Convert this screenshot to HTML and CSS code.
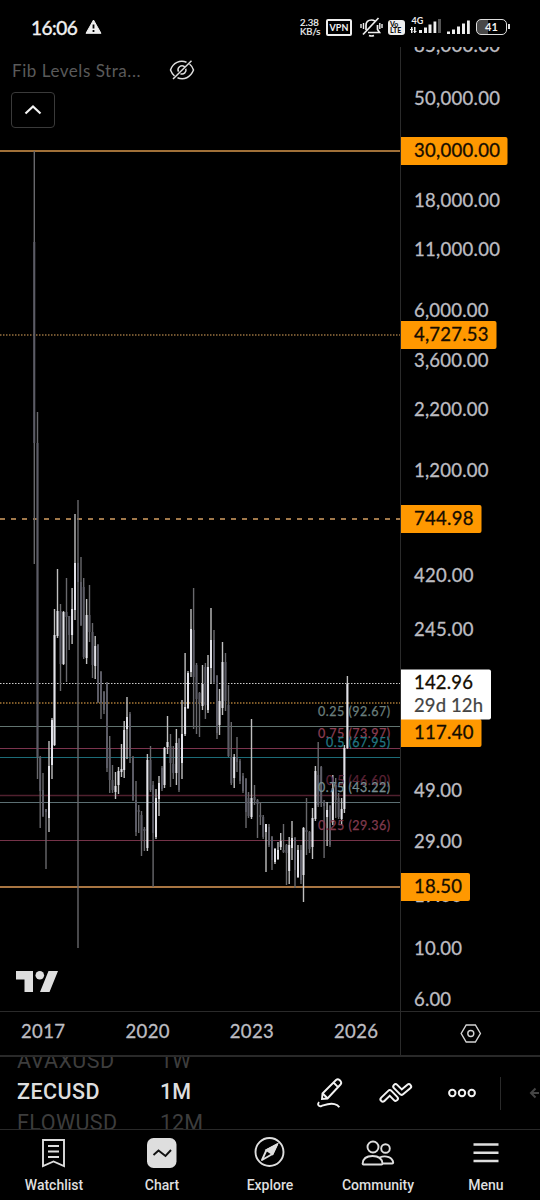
FILE: index.html
```html
<!DOCTYPE html>
<html lang="en">

<head>
    <meta charset="utf-8">
    <title>ZECUSD 1M</title>
    <link rel="stylesheet" href="styles.css">
</head>

<body>
    <header class="status">
        <span class="clock">16:06</span>
        <svg class="warn" width="17" height="16" viewBox="0 0 17 16">
            <path d="M8.5 1 16 14.3H1Z" fill="#eee" stroke="#eee" stroke-linejoin="round" />
            <path d="M8.5 5.5v4M8.5 11v2" stroke="#000" stroke-width="1.8" />
        </svg>
        <div class="speed">2.38<br>KB/s</div>
        <span class="vpn">VPN</span>
        <svg class="bell" width="23" height="20" viewBox="0 0 23 20" fill="none" stroke="#eee" stroke-width="1.7">
            <path d="M6 13V8.500C6 5 8 3 11.500 3c1.500 0 2.500.4 3.500 1.200M17.500 8v4.500l2 3H8M9 18.500q2.500 1 5 0" />
            <path d="M3 17.500 18.500 1" />
            <path d="M1 7v4M3.500 6v6M22 7v4M19.800 6v6" stroke-width="1.4" />
        </svg>
        <span class="volte">Vo<br>LTE</span>
        <svg class="signal" width="32" height="20" viewBox="0 0 32 20" fill="#eee">
            <text x="1.500" y="9" class="net">4G</text>
            <path d="M1 12h1.500v6H1zM4 12h1.500v6H4zM0 14h3v1H0zM3.500 16h3v1h-3zM9 15h3v3H9zM14 12.500h3V18h-3zM18.500 9.500h3V18h-3zM23.500 6.500h2.800V18h-2.800z" />
            <path d="M28 4h3v14h-3z" fill="#555" />
        </svg>
        <svg class="signal2" width="23" height="16" viewBox="0 0 23 16" fill="#eee">
            <path d="M0 12.500h3V15H0zM5 10.500h3V15H5zM10 7.500h3V15h-3zM15 4.500h3V15h-3zM20 1.500h2.800V15H20z" />
        </svg>
        <span class="battery">41</span>
    </header>

    <main class="chart">
        <svg class="pane" width="540" height="1008" viewBox="0 47 540 1008">
            <g id="levels"></g>
            <g id="candles"></g>
            <g id="labels"></g>

            <!-- TradingView mark -->
            <path d="M16 971h17v21h-8.500v-12.500H16zM48.500 971h9.500l-8.500 21H40z" fill="#dedede" />
            <circle cx="39.800" cy="975.300" r="4.300" fill="#dedede" />

            <path d="M400.500 47V1055M0 1011.500H540" stroke="#2a2a2a" />
            <g id="prices"></g>
            <g class="years">
                <text x="21" y="1038" textLength="44">2017</text>
                <text x="125.500" y="1038" textLength="44">2020</text>
                <text x="229.700" y="1038" textLength="44">2023</text>
                <text x="334" y="1038" textLength="44">2026</text>
            </g>
            <g fill="none" stroke="#d4d4d4" stroke-width="1.4">
                <path d="M466.200 1025h9.200l5 8.500-5 8.500h-9.200l-5-8.500z" />
                <circle cx="470.800" cy="1033.500" r="3" />
            </g>
        </svg>
        <div class="legend">
            <span class="study">Fib Levels Stra...</span>
            <svg width="26" height="22" viewBox="0 0 26 22" fill="none" stroke="#ddd" stroke-width="1.5">
                <path d="M17.500 3.200C11 .8 4 3.500 1.500 11c1 2.600 2.300 4.500 4 6M20.500 5c1.800 1.400 3.200 3.500 4 6-3 7.500-9.500 10.500-16 7.800" />
                <path d="M15.500 7.700a4 4 0 0 0-6 5M16.800 9.700a4 4 0 0 1-5.300 5M4 20 22.500 1.800" />
            </svg>
        </div>
        <button class="collapse">
            <svg width="18" height="12" viewBox="0 0 18 12" fill="none" stroke="#f2f2f2" stroke-width="2.2">
                <path d="M1.500 9.500 9 2.500l7.500 7" />
            </svg>
        </button>
    </main>

    <section class="toolbar">
        <div class="wheel symbols">
            <span class="off">AVAXUSD</span>
            <span>ZECUSD</span>
            <span class="off">FLOWUSD</span>
        </div>
        <div class="wheel intervals">
            <span class="off">1W</span>
            <span>1M</span>
            <span class="off">12M</span>
        </div>
        <div class="tools">
            <svg width="28" height="32" viewBox="0 0 28 32" fill="none" stroke="#f2f2f2" stroke-width="1.9">
                <path d="M7 22 7.500 16.500 21 3q1.800-1.500 3.500 0l1 1q1.500 1.800 0 3.500L12.500 21.500zM7.700 16.500l5 5M18.500 5.500l4.800 4.800" />
                <path d="M4 25c-2 2.500-.3 4.800 2.500 4 4-1.300 8-3.200 13-1.900q3.300.8 4.800 3.200" />
            </svg>
            <!-- white strokes with black ones on top give the hollow chevrons -->
            <svg width="34" height="22" viewBox="0 0 34 22" fill="none" stroke-linecap="round" stroke-linejoin="round">
                <path d="m4.800 17.300 7-6.800 5.800 6M17.600 4.500l6 6 7.200-6" stroke="#f2f2f2" stroke-width="6.600" />
                <path d="m4.800 17.300 7-6.800 5.800 6M17.600 4.500l6 6 7.200-6" stroke="#000" stroke-width="2.600" />
            </svg>
            <svg width="30" height="12" viewBox="0 0 30 12" fill="none" stroke="#f2f2f2" stroke-width="2">
                <circle cx="5.300" cy="6" r="3.200" />
                <circle cx="15" cy="6" r="3.200" />
                <circle cx="24.700" cy="6" r="3.200" />
            </svg>
        </div>
        <svg class="back" width="10" height="12" viewBox="0 0 10 12" fill="none" stroke="#444" stroke-width="2">
            <path d="M6.500 1.500 2 6l4.500 4.500M2 6h8" />
        </svg>
    </section>

    <nav class="tabs">
        <a class="tab">
            <svg width="32" height="32" viewBox="0 0 32 32" fill="none" stroke="#dedede" stroke-width="1.900">
                <path d="M5 3h21v26L15.500 24.500 5 29zM10 9h11M10 14.500h11M10 20h11" />
            </svg>
            Watchlist
        </a>
        <a class="tab">
            <svg width="32" height="32" viewBox="0 0 32 32" fill="none">
                <rect x="1" y="1" width="29.500" height="30" rx="6.500" fill="#dedede" />
                <path d="m7.500 18 5-4.500 7 5.500 5.500-6" stroke="#111" stroke-width="1.900" />
            </svg>
            Chart
        </a>
        <a class="tab">
            <svg width="32" height="32" viewBox="0 0 32 32" fill="none" stroke="#dedede" stroke-width="1.900">
                <circle cx="15.500" cy="15" r="14" />
                <path d="m8 23 4.500-10L23 7.500 18.500 17z" stroke-linejoin="round" />
                <path d="M12.500 13 23 7.500 18.500 17z" fill="#dedede" />
            </svg>
            Explore
        </a>
        <a class="tab">
            <svg width="32" height="32" viewBox="0 0 32 32" fill="none" stroke="#dedede" stroke-width="1.900">
                <circle cx="11" cy="10" r="5.500" />
                <circle cx="23.500" cy="11.500" r="4.300" />
                <path d="M1.500 27.500q-1 0-.8-1C1 21.500 5 19 10.500 19S20 21.500 20.500 26.500q0 1-1 1zM17.500 20.500c7-3 13 .5 13.700 5q0 1-1 1h-9.700" />
            </svg>
            Community
        </a>
        <a class="tab">
            <svg width="32" height="32" viewBox="0 0 32 32" stroke="#dedede" stroke-width="2.500">
                <path d="M3.500 7.500h25M3.500 15.700h25M3.500 24h25" />
            </svg>
            Menu
        </a>
    </nav>

    <script src="chart.js"></script>
</body>

</html>
```

FILE: styles.css
```css
* {
    box-sizing: border-box;
}

body {
    margin: 0;
    width: 540px;
    height: 1200px;
    overflow: hidden;
    background-color: #000;
    color: #dedede;
    font-family: Roboto, Arial, sans-serif;
}

svg {
    display: block;
    flex: none;
    overflow: visible;
}

/* status bar */
.status {
    display: flex;
    align-items: center;
    height: 47px;
    padding: 7px 0 0 31px;
    font-family: Lato, sans-serif;
    color: #f2f2f2;
}

.clock {
    width: 45px;
    font-size: 19px;
    -webkit-text-stroke: 0.4px #f2f2f2;
    letter-spacing: -0.5px;
}

.warn {
    margin-left: 9px;
}

.speed {
    width: 26px;
    margin-left: 198px;
    font-size: 9.5px;
    line-height: 9px;
    -webkit-text-stroke: 0.2px #f2f2f2;
    white-space: nowrap;
}

.vpn {
    width: 26px;
    height: 17px;
    border: 2px solid #eee;
    border-radius: 2px;
    font-size: 9px;
    line-height: 13px;
    font-weight: bold;
    text-align: center;
}

.bell {
    margin-left: 8px;
}

.volte {
    width: 17px;
    height: 15px;
    margin-left: 5px;
    padding: 1px 0 0 2px;
    border-radius: 3px;
    background-color: #eee;
    color: #111;
    font-size: 7px;
    line-height: 6.5px;
    font-weight: 900;
}

.signal {
    margin: -4px 0 0 5px;
}

.net {
    font-size: 9px;
    font-weight: bold;
}

.signal2 {
    margin-left: 5px;
}

.battery {
    position: relative;
    width: 31px;
    height: 16px;
    margin-left: 6px;
    border: 1.5px solid #ddd;
    border-radius: 5px;
    background: linear-gradient(90deg, #484848 38%, #000 38%);
    font-size: 11px;
    line-height: 13px;
    font-weight: bold;
    text-align: center;
}

.battery::after {
    content: "";
    position: absolute;
    right: -4px;
    top: 4px;
    width: 2px;
    height: 5px;
    background-color: #ddd;
}

/* chart */
.chart {
    position: relative;
    height: 1008px;
}

.pane {
    overflow: hidden;
    font-family: Lato, sans-serif;
    font-size: 18.5px;
}

.legend {
    position: absolute;
    left: 12px;
    top: 12px;
    display: flex;
    align-items: center;
    gap: 27px;
    font-family: Lato, sans-serif;
}

.study {
    width: 130px;
    font-size: 17px;
    letter-spacing: 0.55px;
    white-space: nowrap;
    color: #5a5a5a;
}

.collapse {
    position: absolute;
    left: 11px;
    top: 45px;
    display: flex;
    align-items: center;
    justify-content: center;
    width: 44px;
    height: 36px;
    padding: 0;
    border: 1px solid #3a3a3a;
    border-radius: 4px;
    background-color: #000;
}

.years,
.price {
    fill: #bdbdc2;
    stroke: #bdbdc2;
    stroke-width: 0.3px;
}

.tag {
    fill: #ff9800;
}

.tag-last {
    fill: #fff;
}

.tag-text {
    fill: #140c00;
    stroke: #140c00;
    stroke-width: 0.3px;
}

.tag-time {
    fill: #444;
    stroke: #444;
    stroke-width: 0.2px;
}

.fib {
    font-size: 12.5px;
}

/* symbol and interval wheels */
.toolbar {
    display: flex;
    align-items: center;
    height: 75px;
    border-top: 2px solid #292929;
    border-bottom: 1px solid #292929;
    padding-left: 17px;
}

.wheel {
    display: flex;
    flex-direction: column;
    justify-content: center;
    height: 72px;
    padding-bottom: 3px;
    overflow: hidden;
    font-size: 21.5px;
    line-height: 31px;
    font-weight: 500;
}

.wheel span {
    flex: none;
}

.wheel .off {
    font-weight: normal;
    color: #3d3d3d;
}

.symbols {
    width: 143px;
    letter-spacing: 0.45px;
}

.intervals {
    width: 155px;
}

.tools {
    display: flex;
    align-items: center;
    gap: 35px;
    width: 186px;
    height: 33px;
    border-right: 1px solid #2a2a2a;
}

.back {
    margin-left: 28px;
}

/* bottom tabs */
.tabs {
    display: flex;
    height: 70px;
}

.tab {
    display: flex;
    flex-direction: column;
    align-items: center;
    width: 108px;
    padding-top: 7px;
    gap: 8px;
    font-size: 14px;
    line-height: 17px;
    font-weight: 500;
}
```

FILE: chart.js
```js
var svgNS = "http://www.w3.org/2000/svg";

function add(parent, name, attrs, text) {
    var el = document.createElementNS(svgNS, name);
    for (var key in attrs) {
        el.setAttributeNS(null, key, attrs[key]);
    }
    if (text) {
        el.textContent = text;
    }
    document.getElementById(parent).appendChild(el);
}

// y, colour, stroke width, dash pattern
var levels = [
    [151, "#a07038", 2, ""],
    [335, "#96703f", 1.5, "1.5 1.5"],
    [519, "#a0784a", 2, "5 6"],
    [683.5, "#cfcfcf", 1, "1.5 1.5"],
    [703, "#a87836", 1.5, "1.5 1.5"],
    [726.5, "#627470", 1, ""],
    [748.5, "#7b344e", 1, ""],
    [757.5, "#1c6c78", 1.2, ""],
    [795.5, "#50202f", 1.5, ""],
    [802.5, "#5c6f73", 1, ""],
    [840.5, "#753349", 1, ""],
    [887, "#a87542", 2, ""]
];

levels.forEach(function (l) {
    add("levels", "path", { d: "M0 " + l[0] + "H400", stroke: l[1], "stroke-width": l[2], "stroke-dasharray": l[3] });
});

// x, high, body top, body bottom, low, rising
var candles = [
    [34.3, 151, 242, 443, 564, 0], [37.5, 412, 443, 757, 779, 0], [40.2, 756, 757, 791, 828, 0],
    [43, 773, 790, 816, 817, 0], [46, 809, 809, 812, 869, 0], [49, 741, 766, 818, 832, 1],
    [52, 718, 720, 765, 779, 1], [54.5, 609, 635, 745, 746, 1], [57.5, 569, 611, 636, 638, 1],
    [60.5, 604, 611, 664, 691, 0], [63.5, 611, 612, 664, 665, 1], [66.5, 578, 612, 617, 682, 0],
    [69.2, 616, 616, 635, 650, 0], [72.1, 588, 609, 635, 644, 1], [75, 514, 563, 610, 620, 1],
    [78, 500, 563, 582, 948, 0], [81, 557, 582, 625, 626, 0], [83.7, 578, 587, 657, 659, 0],
    [86.6, 599, 615, 658, 664, 1], [89.5, 585, 615, 632, 642, 0], [92.5, 623, 632, 665, 678, 0],
    [95.2, 636, 646, 666, 679, 1], [98, 644, 645, 702, 703, 0], [101, 671, 672, 703, 719, 0],
    [104, 691, 692, 710, 714, 0], [107, 682, 683, 768, 772, 0], [109.7, 736, 748, 780, 793, 0],
    [112.5, 765, 780, 790, 793, 0], [115.5, 772, 786, 792, 799, 1], [118.5, 767, 771, 785, 794, 1],
    [121.5, 744, 769, 772, 777, 1], [124.2, 721, 730, 770, 778, 1], [127, 697, 717, 729, 759, 1],
    [130, 712, 714, 756, 763, 0], [133, 756, 757, 800, 801, 0], [136, 781, 800, 832, 836, 0],
    [138.7, 805, 810, 812, 833, 0], [141.5, 811, 815, 840, 856, 0], [144.4, 827, 829, 831, 851, 0],
    [147.4, 754, 760, 848, 851, 1], [150.5, 746, 760, 790, 792, 0], [153.1, 781, 785, 833, 887, 0],
    [156, 789, 798, 837, 839, 1], [159, 776, 783, 799, 816, 1], [162, 766, 768, 789, 791, 0],
    [164.5, 747, 748, 785, 788, 1], [167.5, 716, 742, 747, 754, 1], [170.5, 734, 746, 763, 787, 0],
    [173.3, 746, 764, 773, 779, 0], [176.4, 729, 743, 773, 785, 1], [179, 738, 739, 790, 792, 0],
    [182, 700, 734, 763, 779, 1], [185.1, 653, 707, 734, 736, 1], [188, 671, 673, 708, 709, 1],
    [191, 609, 629, 672, 677, 1], [193.6, 588, 630, 677, 729, 0], [196.5, 663, 665, 699, 734, 0],
    [199.5, 692, 693, 703, 737, 0], [202.5, 665, 684, 706, 710, 1], [205.4, 663, 667, 705, 719, 0],
    [208, 655, 667, 710, 713, 1], [211, 608, 640, 668, 684, 1], [214, 630, 640, 682, 684, 0],
    [217, 675, 676, 733, 739, 0], [219.5, 689, 701, 725, 735, 1], [222.5, 642, 662, 708, 715, 1],
    [225.5, 653, 662, 701, 711, 0], [228.5, 685, 705, 756, 757, 0], [231.3, 722, 757, 783, 785, 0],
    [234.2, 754, 757, 778, 788, 1], [237, 737, 757, 762, 772, 0], [240, 759, 761, 781, 784, 0],
    [243, 773, 776, 791, 793, 0], [246, 778, 779, 812, 828, 0], [248.5, 792, 798, 816, 818, 0],
    [251.5, 719, 798, 817, 819, 1], [254.5, 785, 797, 800, 805, 0], [257.5, 799, 800, 804, 838, 0],
    [260.4, 802, 815, 817, 825, 0], [263.2, 815, 817, 837, 839, 0], [266, 824, 824, 832, 872, 1],
    [269, 824, 827, 845, 847, 0], [272, 836, 837, 860, 870, 0], [275, 848, 849, 862, 864, 1],
    [278, 842, 850, 859, 860, 1], [280.7, 833, 841, 847, 850, 1], [283.5, 824, 850, 852, 853, 0],
    [286.5, 844, 845, 853, 885, 0], [289.2, 837, 845, 871, 884, 1], [292, 821, 838, 848, 860, 1],
    [295, 837, 838, 870, 888, 0], [298, 845, 850, 877, 878, 1], [301, 845, 850, 880, 884, 0],
    [303.5, 827, 828, 875, 902, 1], [306.5, 798, 830, 832, 855, 0], [309.5, 831, 832, 849, 853, 0],
    [312.5, 808, 818, 847, 859, 1], [315.4, 766, 771, 819, 821, 1], [318.2, 742, 775, 805, 807, 0],
    [321.2, 766, 767, 802, 807, 0], [324.1, 800, 802, 806, 858, 0], [327.1, 802, 810, 817, 846, 1],
    [330, 805, 806, 845, 847, 0], [332.8, 775, 788, 822, 825, 1], [335.7, 778, 785, 800, 818, 0],
    [338.6, 793, 798, 817, 819, 0], [341.6, 798, 809, 819, 825, 1], [344.4, 745, 748, 809, 813, 1],
    [347.4, 676, 684, 748, 749, 1]
];

candles.forEach(function (c) {
    add("candles", "path", { d: "M" + c[0] + " " + c[1] + "V" + c[4], stroke: c[5] ? "#bfbfbf" : "#68686c", "stroke-width": 1.4 });
    add("candles", "path", { d: "M" + c[0] + " " + c[2] + "V" + c[3], stroke: c[5] ? "#e2e2e8" : "#5c5c66", "stroke-width": 2 });
});

// fib captions: baseline, left, colour, text
var fibs = [
    [716, 318, "#6a7e7c", "0.25 (92.67)"],
    [738, 318, "#8c3d52", "0.75 (73.97)"],
    [747, 326, "#227783", "0.5 (67.95)"],
    [785, 326, "#5b2235", "0.5 (46.60)"],
    [792, 318, "#768c90", "0.75 (43.22)"],
    [830, 318, "#813a4e", "0.25 (29.36)"]
];

fibs.forEach(function (f) {
    add("labels", "text", { x: f[1], y: f[0], fill: f[2], stroke: f[2], "stroke-width": 0.25, "class": "fib", textLength: 390 - f[1] }, f[3]);
});

// price scale: baseline, right edge, text
var prices = [
    [52, 500, "85,000.00"], [105, 500, "50,000.00"], [207, 500, "18,000.00"], [256, 500, "11,000.00"],
    [316.5, 488.5, "6,000.00"], [367, 488.5, "3,600.00"], [416, 488.5, "2,200.00"], [476.5, 488.5, "1,200.00"],
    [581.5, 473.5, "420.00"], [635.5, 473.5, "245.00"], [796.5, 462, "49.00"], [848, 462, "29.00"],
    [901.5, 462, "17.00"], [954.5, 462, "10.00"], [1005.5, 451, "6.00"]
];

prices.forEach(function (p) {
    add("prices", "text", { x: 414, y: p[0], "class": "price", textLength: p[1] - 414 }, p[2]);
});

// tags: top, width, height, text right edge, text
var tags = [
    [137, 107, 28, 500, "30,000.00"],
    [321, 96, 28, 488.5, "4,727.53"],
    [505, 81, 28, 473.5, "744.98"],
    [719, 81, 28, 473.5, "117.40"],
    [873, 69.5, 28, 462, "18.50"]
];

tags.forEach(function (t) {
    add("prices", "path", { d: "M401 " + t[0] + "h" + (t[1] - 2.5) + "q2 0 2 2v" + (t[2] - 4) + "q0 2-2 2H401z", "class": "tag" });
    add("prices", "text", { x: 414, y: t[0] + 19.5, "class": "tag-text", textLength: t[3] - 414 }, t[4]);
});

// last price and time to bar close
add("prices", "path", { d: "M401 669.500h88q2 0 2 2v46q0 2-2 2H401z", "class": "tag-last" });
add("prices", "text", { x: 414, y: 689, "class": "tag-text", textLength: 59 }, "142.96");
add("prices", "text", { x: 414, y: 711.5, "class": "tag-time", textLength: 69 }, "29d 12h");
```
